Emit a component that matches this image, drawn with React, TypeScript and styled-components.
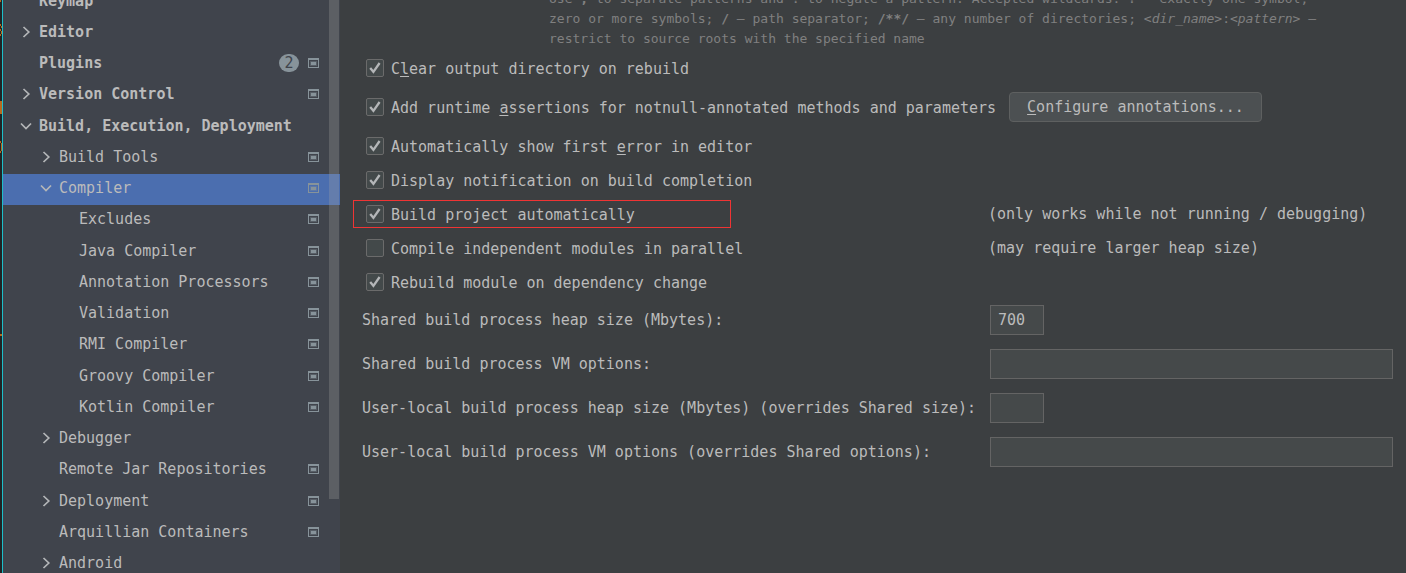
import React from 'react';
import styled, { createGlobalStyle, css } from 'styled-components';

const GlobalStyle = createGlobalStyle`
  *, *::before, *::after { box-sizing: border-box; }
  html, body { margin: 0; height: 100%; background: #3c3f41; }
  body, button, input {
    font-family: 'DejaVu Sans Mono', 'Liberation Mono', monospace;
    font-size: 15px;
    line-height: 20px;
    color: #bbbbbb;
  }
`;

const Window = styled.div`
  display: flex;
  height: 100vh;
  overflow: hidden;
`;

const EditorEdge = styled.div`
  flex: none;
  width: 3px;
  border-right: 1px solid #1cbfc9;
  background: #202425;
  svg { display: block; }
`;

const Sidebar = styled.nav`
  position: relative;
  flex: none;
  width: 337px;
  overflow: hidden;
  background: #40444c;
`;

const Tree = styled.ul`
  margin: -14px 0 0;
  padding: 0;
  list-style: none;
`;

const TreeRow = styled.li<{ $level: number; $selected?: boolean }>`
  display: flex;
  align-items: center;
  height: 31px;
  padding: 0 21px 3px ${p => 13 + p.$level * 20}px;
  background: ${p => (p.$selected ? '#4b6eaf' : 'transparent')};
  font-weight: ${p => (p.$level === 0 ? 700 : 400)};
  &:nth-child(4n + 1) { height: 32px; }
`;

const Toggle = styled.span`
  flex: none;
  display: flex;
  width: 23px;
`;

const ItemLabel = styled.span`
  flex: 1;
  white-space: nowrap;
`;

const Count = styled.span`
  width: 20px;
  height: 18px;
  margin-right: 9px;
  border-radius: 9px;
  background: #87939a;
  color: #40444c;
  font-weight: 400;
  line-height: 18px;
  text-align: center;
`;

const Scrollbar = styled.div`
  position: absolute;
  top: 0;
  right: 1px;
  width: 10px;
  height: 87%;
  background: rgba(166, 166, 166, 0.28);
`;

const Main = styled.main`
  flex: 1;
  min-width: 0;
  padding: 0 13px 0 22px;
`;

const Hint = styled.p`
  margin: -11px 0 2px 187px;
  color: #808080;
  font-size: 13px;
  line-height: 20px;
  white-space: nowrap;
`;

const grid = css`
  display: grid;
  grid-template-columns: 626px minmax(0, 1fr);
  align-items: center;
`;

const OptionRow = styled.div<{ $tall?: boolean }>`
  ${grid}
  position: relative;
  height: ${p => (p.$tall ? 44 : 34)}px;
  white-space: nowrap;
`;

const OptionMain = styled.div`
  display: flex;
  align-items: center;
  gap: 13px;
`;

const Check = styled.label`
  display: flex;
  align-items: center;
  gap: 7px;
  padding-left: 4px;
`;

const CheckText = styled.span`
  padding-top: 2px;
`;

const Box = styled.input`
  appearance: none;
  flex: none;
  width: 18px;
  height: 18px;
  margin: 0;
  border: 1px solid #6b6b6b;
  border-radius: 2px;
  background: #43494a;
`;

const BoxWrap = styled.span`
  position: relative;
  display: flex;
  svg { position: absolute; inset: 0; pointer-events: none; }
`;

const Mnemonic = styled.span`
  text-decoration: underline;
  text-decoration-thickness: 1px;
  text-underline-offset: 2px;
`;

const Button = styled.button`
  height: 30px;
  padding: 0 17px;
  border: 1px solid #5e6060;
  border-radius: 4px;
  background: #4c5052;
  white-space: nowrap;
`;

const Highlight = styled.span`
  position: absolute;
  top: 3px;
  left: -9px;
  width: 378px;
  height: 28px;
  border: 1px solid #f03434;
  pointer-events: none;
`;

const Fields = styled.div`
  display: grid;
  gap: 14px;
  padding-top: 6px;
`;

const FieldRow = styled.div`
  ${grid}
  white-space: nowrap;
`;

const TextField = styled.input<{ $short?: boolean }>`
  width: ${p => (p.$short ? '54px' : 'auto')};
  height: 30px;
  margin: 0 0 0 2px;
  padding: 0 7px;
  border: 1px solid #646464;
  border-radius: 0;
  background: #45494a;
  outline: none;
`;

const ChevronRight = () => (
  <svg width="20" height="14" viewBox="0 0 20 14" fill="none" stroke="#b4b6b8" strokeWidth="1.7" aria-hidden="true">
    <path d="M7.5 2 L12.8 7 L7.5 12" />
  </svg>
);

const ChevronDown = () => (
  <svg width="20" height="14" viewBox="0 0 20 14" fill="none" stroke="#b4b6b8" strokeWidth="1.7" aria-hidden="true">
    <path d="M5 4.5 L10 9.6 L15 4.5" />
  </svg>
);

const ProjectIcon = () => (
  <svg width="11" height="10" viewBox="0 0 11 10" aria-hidden="true">
    <path fill="#87939a" fillRule="evenodd" d="M0 0H11V10H0ZM1 2V9H10V2Z" />
    <path fill="#87939a" d="M3 4H8V7H3Z" />
    <path fill="none" stroke="#87939a" strokeOpacity="0.35" d="M2.5 3.5H8.5V7.5H2.5Z" />
  </svg>
);

const Tick = () => (
  <svg width="18" height="18" viewBox="0 0 18 18" fill="none" stroke="#b4b6b8" strokeWidth="2.3" aria-hidden="true">
    <path d="M4.2 9 L7.4 12.8 L13.6 4" />
  </svg>
);

type Item = { name: string; level: number; state?: 'open' | 'closed'; icon?: boolean; count?: number };

const items: Item[] = [
  { name: 'Keymap', level: 0 },
  { name: 'Editor', level: 0, state: 'closed' },
  { name: 'Plugins', level: 0, icon: true, count: 2 },
  { name: 'Version Control', level: 0, state: 'closed', icon: true },
  { name: 'Build, Execution, Deployment', level: 0, state: 'open' },
  { name: 'Build Tools', level: 1, state: 'closed', icon: true },
  { name: 'Compiler', level: 1, state: 'open', icon: true },
  { name: 'Excludes', level: 2, icon: true },
  { name: 'Java Compiler', level: 2, icon: true },
  { name: 'Annotation Processors', level: 2, icon: true },
  { name: 'Validation', level: 2, icon: true },
  { name: 'RMI Compiler', level: 2, icon: true },
  { name: 'Groovy Compiler', level: 2, icon: true },
  { name: 'Kotlin Compiler', level: 2, icon: true },
  { name: 'Debugger', level: 1, state: 'closed' },
  { name: 'Remote Jar Repositories', level: 1, icon: true },
  { name: 'Deployment', level: 1, state: 'closed', icon: true },
  { name: 'Arquillian Containers', level: 1, icon: true },
  { name: 'Android', level: 1, state: 'closed' },
];

type OptionProps = {
  children: React.ReactNode;
  checked?: boolean;
  note?: string;
  action?: React.ReactNode;
  highlighted?: boolean;
};

const Option = ({ children, checked = true, note, action, highlighted }: OptionProps) => {
  const [on, setOn] = React.useState(checked);
  return (
    <OptionRow $tall={Boolean(action)}>
      <OptionMain>
        <Check>
          <BoxWrap>
            <Box type="checkbox" checked={on} onChange={e => setOn(e.target.checked)} />
            {on && <Tick />}
          </BoxWrap>
          <CheckText>{children}</CheckText>
        </Check>
        {action}
      </OptionMain>
      {note && <span>{note}</span>}
      {highlighted && <Highlight />}
    </OptionRow>
  );
};

const fields = [
  { id: 'shared-heap', label: 'Shared build process heap size (Mbytes):', value: '700', short: true },
  { id: 'shared-vm', label: 'Shared build process VM options:', value: '' },
  { id: 'user-heap', label: 'User-local build process heap size (Mbytes) (overrides Shared size):', value: '', short: true },
  { id: 'user-vm', label: 'User-local build process VM options (overrides Shared options):', value: '' },
];

export default function App() {
  return (
    <>
      <GlobalStyle />
      <Window>
        <EditorEdge>
          <svg width="2" height="340" viewBox="0 0 2 340" fill="#b8691f" aria-hidden="true">
            <path d="M0 0H1V2H0ZM0 24H1V26H0ZM1 26H2V28H1ZM0 29H1V31H0ZM1 31H2V34H1ZM0 34H1V36H0ZM0 101H2V114H0ZM0 141H1V143H0ZM1 143H2V151H1ZM0 151H1V153H0ZM0 334H2V336H0Z" />
          </svg>
        </EditorEdge>
        <Sidebar aria-label="Settings">
          <Tree>
            {items.map(item => (
              <TreeRow key={item.name} $level={item.level} $selected={item.name === 'Compiler'}>
                <Toggle>
                  {item.state === 'open' && <ChevronDown />}
                  {item.state === 'closed' && <ChevronRight />}
                </Toggle>
                <ItemLabel>{item.name}</ItemLabel>
                {item.count && <Count>{item.count}</Count>}
                {item.icon && <ProjectIcon />}
              </TreeRow>
            ))}
          </Tree>
          <Scrollbar />
        </Sidebar>
        <Main>
          <Hint>
            Use <b>;</b> to separate patterns and <b>!</b> to negate a pattern. Accepted wildcards: <b>?</b> — exactly one symbol; <b>*</b> —<br />
            zero or more symbols; <b>/</b> — path separator; <b>/**/</b> — any number of directories; <i>&lt;dir_name&gt;</i>:<i>&lt;pattern&gt;</i> —<br />
            restrict to source roots with the specified name
          </Hint>
          <Option>C<Mnemonic>l</Mnemonic>ear output directory on rebuild</Option>
          <Option action={<Button type="button"><Mnemonic>C</Mnemonic>onfigure annotations...</Button>}>
            Add runtime <Mnemonic>a</Mnemonic>ssertions for notnull-annotated methods and parameters
          </Option>
          <Option>Automatically show first <Mnemonic>e</Mnemonic>rror in editor</Option>
          <Option>Display notification on build completion</Option>
          <Option note="(only works while not running / debugging)" highlighted>Build project automatically</Option>
          <Option checked={false} note="(may require larger heap size)">Compile independent modules in parallel</Option>
          <Option>Rebuild module on dependency change</Option>
          <Fields>
            {fields.map(f => (
              <FieldRow key={f.id}>
                <label htmlFor={f.id}>{f.label}</label>
                <TextField id={f.id} type="text" defaultValue={f.value} $short={f.short} />
              </FieldRow>
            ))}
          </Fields>
        </Main>
      </Window>
    </>
  );
}
